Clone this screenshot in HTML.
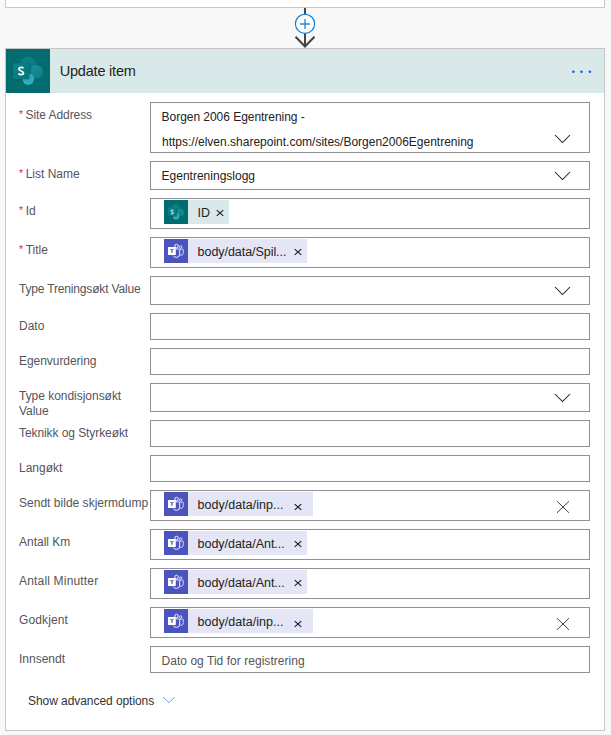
<!DOCTYPE html>
<html>
<head>
<meta charset="utf-8">
<title>Update item</title>
<style>
*{box-sizing:border-box;margin:0;padding:0}
html,body{width:611px;height:735px;overflow:hidden;background:#f8f8f8;font-family:"Liberation Sans",sans-serif;font-size:12px;color:#333}
.abs{position:absolute}
#topbox{left:5px;top:-20px;width:600px;height:28px;background:#fff;border:1px solid #c8c8c8}
#card{left:5px;top:48px;width:600px;height:683px;background:#fff;border:1px solid #c8c6c4}
#hdr{left:6px;top:49px;width:598px;height:44px;background:#d9e9e9}
#htitle{left:59.7px;top:49px;height:44px;line-height:44px;font-size:14.5px;letter-spacing:-.2px;color:#222}
.lbl{position:absolute;left:19px;font-size:12px;line-height:14px;color:#55555a;white-space:nowrap}
.lbl i{font-style:normal;color:#e8254a;font-size:10.5px;position:relative;top:-1px;margin-right:2.6px}
.box{position:absolute;left:150px;width:440px;background:#fff;border:1px solid #919191}
.txt{position:absolute;left:162px;font-size:12px;line-height:14px;color:#222;white-space:nowrap}
.tok{position:absolute;left:164px;height:24px}
.tok svg.ic{position:absolute;left:0;top:0;width:24px;height:24px}
.tok .tx{position:absolute;left:24px;top:0;height:24px;line-height:26px;font-size:12.5px;letter-spacing:-.1px;color:#222;white-space:nowrap;padding-left:9.6px}
.tok svg.x{position:absolute;top:0}
.sp .tx{background:#d9e9e9}
.tm .tx{background:#e4e5f5}
.chev{position:absolute;left:553px}
</style>
</head>
<body>
<svg width="0" height="0" style="position:absolute">
<defs>
<linearGradient id="g1" x1="0" y1="0" x2="0" y2="1"><stop offset="0" stop-color="#0c838a"/><stop offset="1" stop-color="#06757b"/></linearGradient>
<linearGradient id="g2" x1="0" y1="0" x2="1" y2="1"><stop offset="0" stop-color="#1b9098"/><stop offset="1" stop-color="#0f7d85"/></linearGradient>
<linearGradient id="g3" x1="0" y1="0" x2="1" y2="1"><stop offset="0" stop-color="#35c2cc"/><stop offset="1" stop-color="#25a9b3"/></linearGradient>
<linearGradient id="g4" x1="0" y1="0" x2="1" y2="1"><stop offset="0" stop-color="#0d858c"/><stop offset="1" stop-color="#05757b"/></linearGradient>
<filter id="bl" x="-30%" y="-30%" width="160%" height="160%"><feGaussianBlur stdDeviation="1"/></filter>
<symbol id="sp" viewBox="0 0 44 44">
<rect width="44" height="44" fill="#036c70"/>
<circle cx="22" cy="15.7" r="7.9" fill="url(#g1)"/>
<circle cx="30.3" cy="22.8" r="6.7" fill="url(#g2)"/>
<circle cx="22.3" cy="30.2" r="5.7" fill="url(#g3)"/>
<rect x="7.6" y="14.8" width="16.6" height="16" rx="1.5" fill="#01484b" opacity=".45" filter="url(#bl)"/>
<rect x="7.2" y="14.2" width="16" height="15.7" rx="1" fill="url(#g4)"/>
<path d="M17.6 19.1 C16.7 18.5 15.8 18.3 15 18.3 C13.7 18.3 12.9 19 12.9 20 C12.9 22.3 17.5 21.6 17.5 24 C17.5 25 16.6 25.6 15.2 25.6 C14.1 25.6 13.2 25.3 12.4 24.7" fill="none" stroke="#fff" stroke-width="1.7"/>
</symbol>
<symbol id="tm" viewBox="0 0 24 24">
<rect width="24" height="24" fill="#4b53bc"/>
<circle cx="12.5" cy="7" r="1.75" fill="none" stroke="#fff" stroke-width=".9"/>
<path d="M11.8 9.9 H15.2 Q15.7 9.9 15.7 10.4 V15 Q15.7 18.4 12.6 18.4 Q10 18.4 9.1 16.5" fill="none" stroke="#fff" stroke-width=".9"/>
<circle cx="16.7" cy="8" r="1.25" fill="none" stroke="#fff" stroke-width=".8" opacity=".92"/>
<path d="M16 10.2 H18.8 Q19.3 10.2 19.3 10.7 V13.6 Q19.3 16.2 17.2 16.4 Q16.5 16.4 16 16.2" fill="none" stroke="#fff" stroke-width=".8" opacity=".92"/>
<rect x="3.95" y="8.05" width="7.85" height="8" rx=".5" fill="#fff"/>
<path d="M5.9 10 H9.8 V11 H8.85 V13.75 H7.05 V11 H5.9 Z" fill="#4b53bc" opacity=".72"/>
</symbol>
<symbol id="chev" viewBox="0 0 20 12">
<path d="M2 2 L9.5 9.6 L17 2" fill="none" stroke="#222" stroke-width="1.05"/>
</symbol>
<symbol id="bigx" viewBox="0 0 16 16">
<path d="M2 2.2 L14 13.8 M14 2.2 L2 13.8" fill="none" stroke="#444" stroke-width="1"/>
</symbol>
<symbol id="tx" viewBox="0 0 10 10">
<path d="M1.7 2.1 L8.3 7.9 M8.3 2.1 L1.7 7.9" fill="none" stroke="#1c1c2c" stroke-width="1.15"/>
</symbol>
</defs>
</svg>

<div class="abs" id="topbox"></div>
<svg class="abs" style="left:285px;top:0" width="40" height="52" viewBox="0 0 40 52">
<rect x="19" y="8" width="2" height="39" fill="#484644"/>
<path d="M10.5 36.8 L20 46.4 L29.5 36.8" fill="none" stroke="#484644" stroke-width="2.1"/>
<circle cx="20" cy="23.8" r="9.6" fill="#fff" stroke="#0078d4" stroke-width="1.1"/>
<path d="M15 24 H25 M20 19 V29" stroke="#2b88d8" stroke-width="1.4" fill="none"/>
</svg>
<div class="abs" id="card"></div>
<div class="abs" id="hdr"></div>
<svg class="abs" style="left:6px;top:49px" width="44" height="44"><use href="#sp"/></svg>
<div class="abs" id="htitle">Update item</div>
<svg class="abs" style="left:570px;top:68px" width="24" height="8"><circle cx="3.3" cy="3.8" r="1.3" fill="#0b62e6"/><circle cx="11.5" cy="3.8" r="1.3" fill="#0b62e6"/><circle cx="19.9" cy="3.8" r="1.3" fill="#0b62e6"/></svg>

<div class="lbl" style="top:108px;letter-spacing:-.08px"><i>*</i>Site Address</div>
<div class="box" style="top:102px;height:51px"></div>
<div class="txt" style="top:110px;left:161.6px;letter-spacing:-.04px">Borgen 2006 Egentrening -</div>
<div class="txt" style="top:135px;letter-spacing:0">https://elven.sharepoint.com/sites/Borgen2006Egentrening</div>
<svg class="chev" style="top:132.8px" width="20" height="12"><use href="#chev"/></svg>

<div class="lbl" style="top:167px"><i>*</i>List Name</div>
<div class="box" style="top:161px;height:29px"></div>
<div class="txt" style="top:169px;left:161.6px">Egentreningslogg</div>
<svg class="chev" style="top:169.9px" width="20" height="12"><use href="#chev"/></svg>

<div class="lbl" style="top:204px"><i>*</i>Id</div>
<div class="box" style="top:198px;height:31px"></div>
<div class="tok sp" style="top:200px"><svg class="ic"><use href="#sp"/></svg><div class="tx" style="width:41px">ID</div><svg class="x" style="left:50.5px;top:8.3px" width="10" height="10"><use href="#tx"/></svg></div>

<div class="lbl" style="top:243px"><i>*</i>Title</div>
<div class="box" style="top:237px;height:31px"></div>
<div class="tok tm" style="top:239px"><svg class="ic"><use href="#tm"/></svg><div class="tx" style="width:119px;letter-spacing:-.05px">body/data/Spil...</div><svg class="x" style="left:129px;top:8.3px" width="10" height="10"><use href="#tx"/></svg></div>

<div class="lbl" style="top:282px;letter-spacing:-.17px">Type Treningsøkt Value</div>
<div class="box" style="top:276px;height:29px"></div>
<svg class="chev" style="top:284.9px" width="20" height="12"><use href="#chev"/></svg>

<div class="lbl" style="top:319px">Dato</div>
<div class="box" style="top:313px;height:27px"></div>

<div class="lbl" style="top:354px;letter-spacing:-.05px">Egenvurdering</div>
<div class="box" style="top:348px;height:27px"></div>

<div class="lbl" style="top:389px;line-height:15px;letter-spacing:-.03px">Type kondisjonsøkt<br>Value</div>
<div class="box" style="top:383px;height:29px"></div>
<svg class="chev" style="top:391.9px" width="20" height="12"><use href="#chev"/></svg>

<div class="lbl" style="top:426px;letter-spacing:-.08px">Teknikk og Styrkeøkt</div>
<div class="box" style="top:420px;height:27px"></div>

<div class="lbl" style="top:461px">Langøkt</div>
<div class="box" style="top:455px;height:27px"></div>

<div class="lbl" style="top:496px;letter-spacing:.02px">Sendt bilde skjermdump</div>
<div class="box" style="top:490px;height:31px"></div>
<div class="tok tm" style="top:492px"><svg class="ic"><use href="#tm"/></svg><div class="tx" style="width:125px;letter-spacing:.02px">body/data/inp...</div><svg class="x" style="left:129px;top:9.5px" width="10" height="10"><use href="#tx"/></svg></div>
<svg class="abs" style="left:554.5px;top:499px" width="16" height="16"><use href="#bigx"/></svg>

<div class="lbl" style="top:535px;letter-spacing:0">Antall Km</div>
<div class="box" style="top:529px;height:31px"></div>
<div class="tok tm" style="top:531px"><svg class="ic"><use href="#tm"/></svg><div class="tx" style="width:119px;letter-spacing:-.03px">body/data/Ant...</div><svg class="x" style="left:129px;top:8.3px" width="10" height="10"><use href="#tx"/></svg></div>

<div class="lbl" style="top:574px;letter-spacing:.18px">Antall Minutter</div>
<div class="box" style="top:568px;height:31px"></div>
<div class="tok tm" style="top:570px"><svg class="ic"><use href="#tm"/></svg><div class="tx" style="width:119px;letter-spacing:-.03px">body/data/Ant...</div><svg class="x" style="left:129px;top:8.3px" width="10" height="10"><use href="#tx"/></svg></div>

<div class="lbl" style="top:613px;letter-spacing:.12px">Godkjent</div>
<div class="box" style="top:607px;height:31px"></div>
<div class="tok tm" style="top:609px"><svg class="ic"><use href="#tm"/></svg><div class="tx" style="width:125px;letter-spacing:.02px">body/data/inp...</div><svg class="x" style="left:129px;top:9.5px" width="10" height="10"><use href="#tx"/></svg></div>
<svg class="abs" style="left:554.5px;top:616px" width="16" height="16"><use href="#bigx"/></svg>

<div class="lbl" style="top:652px">Innsendt</div>
<div class="box" style="top:646px;height:27px"></div>
<div class="txt" style="top:654px;left:161.5px;letter-spacing:.04px;color:#555">Dato og Tid for registrering</div>

<div class="lbl" style="left:28px;top:694px;letter-spacing:-.06px;color:#333">Show advanced options</div>
<svg class="abs" style="left:161px;top:694px" width="16" height="12" viewBox="0 0 16 12"><path d="M2.1 3.1 L7.9 8.7 L13.8 3.1" fill="none" stroke="#6b8fe8" stroke-width=".9"/></svg>
</body>
</html>
